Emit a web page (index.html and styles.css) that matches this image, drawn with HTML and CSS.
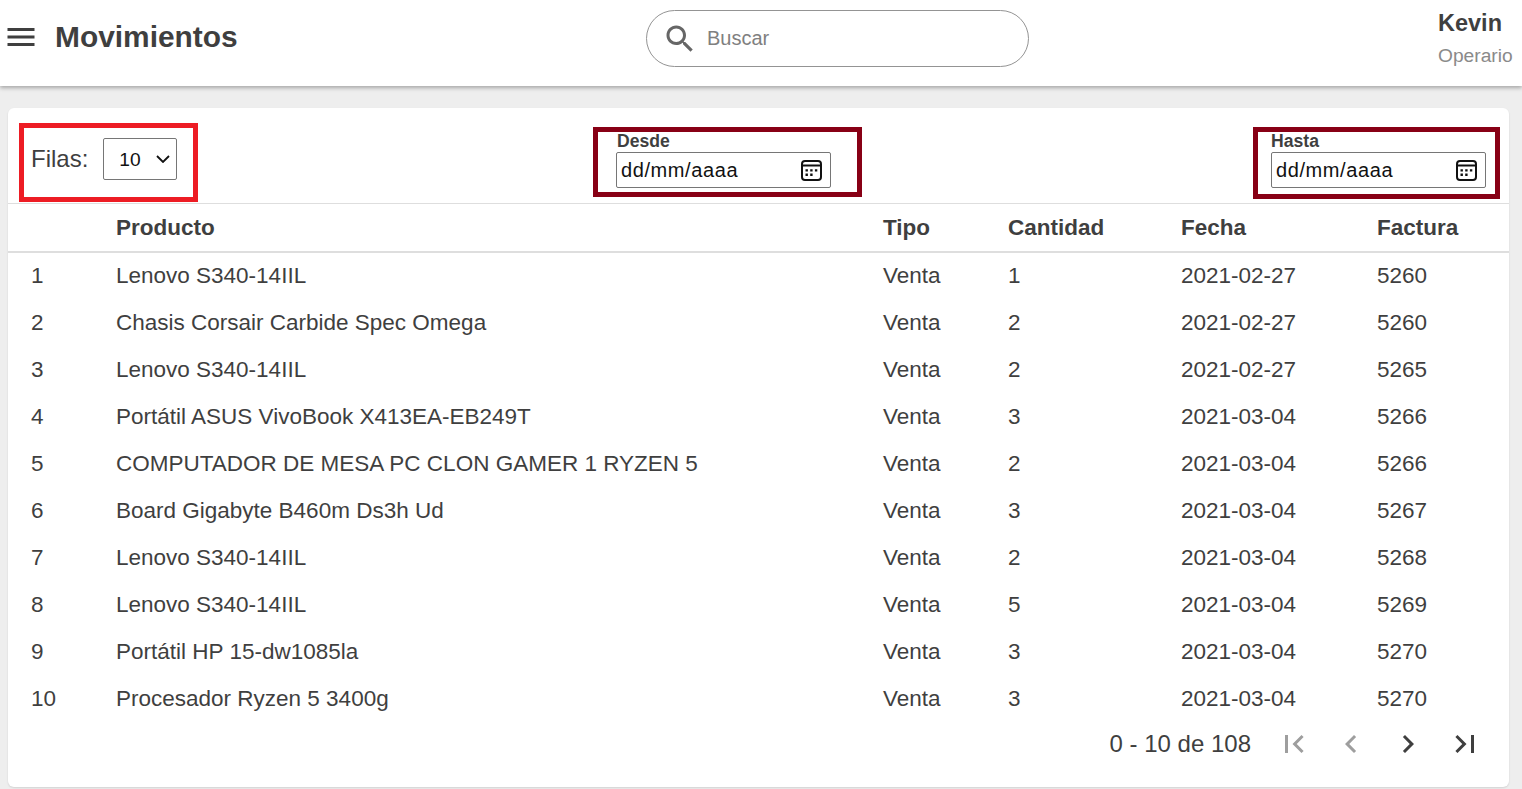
FILE: index.html
```html
<!DOCTYPE html>
<html lang="es">
<head>
<meta charset="utf-8">
<title>Movimientos</title>
<link rel="stylesheet" href="styles.css">
</head>
<body>
<header class="topbar">
  <div class="topbar-left">
    <svg class="icon menu-icon" viewBox="0 0 24 24"><path d="M3 18h18v-2H3v2zm0-5h18v-2H3v2zm0-7v2h18V6H3z"/></svg>
    <h1 class="title">Movimientos</h1>
  </div>
  <label class="search">
    <svg class="icon search-icon" viewBox="0 0 24 24"><path d="M15.5 14h-.79l-.28-.27C15.41 12.59 16 11.11 16 9.5 16 5.91 13.09 3 9.5 3S3 5.91 3 9.5 5.91 16 9.5 16c1.61 0 3.09-.59 4.23-1.57l.27.28v.79l5 4.99L20.49 19l-4.99-5zm-6 0C7.01 14 5 11.99 5 9.5S7.01 5 9.5 5 14 7.01 14 9.5 11.99 14 9.5 14z"/></svg>
    <input class="search-input" type="text" placeholder="Buscar">
  </label>
  <div class="user">
    <div class="user-name">Kevin</div>
    <div class="user-role">Operario</div>
  </div>
</header>
<main class="content">
  <section class="card">
    <div class="filters">
      <div class="box box-red">
        <label class="rows-label" for="filas">Filas:</label>
        <div class="select-wrap">
          <select id="filas" class="rows-select"><option>10</option><option>25</option><option>50</option></select>
          <svg class="select-arrow" viewBox="0 0 14 8"><path d="M1 1l6 6 6-6" fill="none" stroke="#111" stroke-width="1.8"/></svg>
        </div>
      </div>
      <div class="box box-dark box-from">
        <div class="date-field">
          <label class="date-label">Desde</label>
          <div class="date-input">
            <span class="date-text">dd/mm/aaaa</span>
            <svg class="cal" viewBox="0 0 21 21"><rect x="1" y="1" width="19" height="19" rx="3" fill="none" stroke="#111" stroke-width="2"/><path d="M1 5.5h19" stroke="#111" stroke-width="2"/><path d="M4.5 9.2h2.4v2.4H4.5zM9.2 9.2h2.4v2.4H9.2zM13.9 9.2h2.4v2.4h-2.4zM4.5 13.6h2.4V16H4.5zM9.2 13.6h2.4V16H9.2z" fill="#111"/></svg>
          </div>
        </div>
      </div>
      <div class="box box-dark box-to">
        <div class="date-field">
          <label class="date-label date-label-to">Hasta</label>
          <div class="date-input">
            <span class="date-text">dd/mm/aaaa</span>
            <svg class="cal" viewBox="0 0 21 21"><rect x="1" y="1" width="19" height="19" rx="3" fill="none" stroke="#111" stroke-width="2"/><path d="M1 5.5h19" stroke="#111" stroke-width="2"/><path d="M4.5 9.2h2.4v2.4H4.5zM9.2 9.2h2.4v2.4H9.2zM13.9 9.2h2.4v2.4h-2.4zM4.5 13.6h2.4V16H4.5zM9.2 13.6h2.4V16H9.2z" fill="#111"/></svg>
          </div>
        </div>
      </div>
    </div>
    <table class="data">
      <colgroup>
        <col class="c-n"><col class="c-prod"><col class="c-tipo"><col class="c-cant"><col class="c-fecha"><col class="c-fact">
      </colgroup>
      <thead>
        <tr><th></th><th>Producto</th><th>Tipo</th><th>Cantidad</th><th>Fecha</th><th>Factura</th></tr>
      </thead>
      <tbody>
        <tr><td>1</td><td>Lenovo S340-14IIL</td><td>Venta</td><td>1</td><td>2021-02-27</td><td>5260</td></tr>
        <tr><td>2</td><td>Chasis Corsair Carbide Spec Omega</td><td>Venta</td><td>2</td><td>2021-02-27</td><td>5260</td></tr>
        <tr><td>3</td><td>Lenovo S340-14IIL</td><td>Venta</td><td>2</td><td>2021-02-27</td><td>5265</td></tr>
        <tr><td>4</td><td>Portátil ASUS VivoBook X413EA-EB249T</td><td>Venta</td><td>3</td><td>2021-03-04</td><td>5266</td></tr>
        <tr><td>5</td><td>COMPUTADOR DE MESA PC CLON GAMER 1 RYZEN 5</td><td>Venta</td><td>2</td><td>2021-03-04</td><td>5266</td></tr>
        <tr><td>6</td><td>Board Gigabyte B460m Ds3h Ud</td><td>Venta</td><td>3</td><td>2021-03-04</td><td>5267</td></tr>
        <tr><td>7</td><td>Lenovo S340-14IIL</td><td>Venta</td><td>2</td><td>2021-03-04</td><td>5268</td></tr>
        <tr><td>8</td><td>Lenovo S340-14IIL</td><td>Venta</td><td>5</td><td>2021-03-04</td><td>5269</td></tr>
        <tr><td>9</td><td>Portátil HP 15-dw1085la</td><td>Venta</td><td>3</td><td>2021-03-04</td><td>5270</td></tr>
        <tr><td>10</td><td>Procesador Ryzen 5 3400g</td><td>Venta</td><td>3</td><td>2021-03-04</td><td>5270</td></tr>
      </tbody>
    </table>
    <div class="pager">
      <span class="pager-text">0 - 10 de 108</span>
      <div class="pager-btns">
        <svg class="icon pg pg-off" viewBox="0 0 24 24"><path d="M18.41 16.59L13.82 12l4.59-4.59L17 6l-6 6 6 6zM6 6h2v12H6z"/></svg>
        <svg class="icon pg pg-off" viewBox="0 0 24 24"><path d="M15.41 7.41L14 6l-6 6 6 6 1.41-1.41L10.83 12z"/></svg>
        <svg class="icon pg" viewBox="0 0 24 24"><path d="M10 6L8.59 7.41 13.17 12l-4.58 4.59L10 18l6-6z"/></svg>
        <svg class="icon pg" viewBox="0 0 24 24"><path d="M5.59 7.41L10.18 12l-4.59 4.59L7 18l6-6-6-6zM16 6h2v12h-2z"/></svg>
      </div>
    </div>
  </section>
</main>
</body>
</html>
```
FILE: styles.css
```css
* { box-sizing: border-box; }
html, body { height: 100%; }
body {
  margin: 0;
  background: #eeeeee;
  color: #3f3f3f;
  font-family: "Liberation Sans", Arial, sans-serif;
  overflow: hidden;
}
.icon { display: block; width: 36px; height: 36px; fill: #3f3f3f; flex: none; }

.topbar {
  height: 86px;
  background: #fff;
  box-shadow: 0 2px 4px rgba(0,0,0,.3);
  display: flex;
  align-items: center;
  position: relative;
}
.topbar-left {
  width: 646px;
  display: flex;
  align-items: center;
  padding-left: 3px;
  margin-top: -12px;
  flex: none;
}
.title {
  margin: 0 0 0 16px;
  font-size: 29.9px;
  font-weight: 700;
  line-height: 36px;
}
.search {
  width: 383px;
  height: 57px;
  margin-top: -9px;
  border: 1px solid #949494;
  border-radius: 28.5px;
  display: flex;
  align-items: center;
  padding-left: 15px;
  flex: none;
}
.search-icon { fill: #666; }
.search-input {
  border: 0;
  outline: 0;
  background: transparent;
  margin-left: 9px;
  padding: 0;
  font: 20px "Liberation Sans", Arial, sans-serif;
  width: 300px;
  color: #3f3f3f;
}
.search-input::placeholder { color: #808080; opacity: 1; }
.user {
  margin-left: 409px;
  margin-top: -11px;
  flex: none;
}
.user-name { font-size: 23.5px; font-weight: 700; line-height: 30px; }
.user-role { font-size: 19.2px; line-height: 24px; margin-top: 6px; color: #8a8a8a; }

.content { padding: 22px 13px 0 8px; }
.card {
  background: #fff;
  border-radius: 6px;
  height: 679px;
  box-shadow: 0 1px 2px rgba(0,0,0,.12);
  overflow: hidden;
}
.filters {
  height: 96px;
  border-bottom: 1px solid #dedede;
  display: flex;
  align-items: flex-start;
  padding: 15px 0 0 11px;
}
.box { display: flex; }
.box-red {
  width: 179px;
  height: 79px;
  border: 5px solid #ed1c24;
  align-items: center;
  padding: 0 0 7px 7px;
}
.box-dark { border: 5px solid #880015; margin-top: 4px; }
.box-from { width: 269px; height: 70px; margin-left: 395px; padding-left: 18px; }
.box-to { width: 247px; height: 72px; margin-left: 391px; padding-left: 13px; }
.rows-label { font-size: 24px; line-height: 28px; }
.select-wrap { position: relative; margin-left: 15px; }
.rows-select {
  display: block;
  appearance: none;
  width: 74px;
  height: 42px;
  padding-left: 15px;
  font: 19.2px "Liberation Sans", Arial, sans-serif;
  color: #111;
  background: #fff;
  border: 1px solid #767676;
  border-radius: 2px;
}
.select-arrow {
  position: absolute;
  left: 53px;
  top: 17px;
  width: 14px;
  height: 8px;
  pointer-events: none;
}
.date-field { display: flex; flex-direction: column; }
.date-label {
  font-size: 17.6px;
  font-weight: 700;
  line-height: 18px;
  height: 20px;
  padding-left: 1px;
}
.date-label-to { padding-left: 0; }
.date-input {
  width: 215px;
  height: 36px;
  border: 1px solid #767676;
  border-radius: 2px;
  display: flex;
  align-items: center;
  justify-content: space-between;
  padding: 0 8px 0 4px;
}
.date-text { font-size: 20px; letter-spacing: .6px; color: #111; }
.cal { width: 21px; height: 21px; display: block; }

.data {
  width: 100%;
  table-layout: fixed;
  border-collapse: collapse;
  font-size: 22.5px;
}
.c-n { width: 86px; }
.c-prod { width: 767px; }
.c-tipo { width: 125px; }
.c-cant { width: 173px; }
.c-fecha { width: 196px; }
.data th, .data td { padding: 0 0 0 22px; text-align: left; white-space: nowrap; }
.data th:first-child, .data td:first-child { padding-left: 23px; }
.data th { height: 48px; font-weight: 700; border-bottom: 2px solid #dedede; }
.data td { height: 47px; }

.pager {
  display: flex;
  align-items: center;
  justify-content: flex-end;
  height: 44px;
  padding-right: 26px;
}
.pager-text { font-size: 24px; margin-right: 25px; }
.pager-btns { display: flex; gap: 21px; }
.pg-off { fill: #9e9e9e; }
```
